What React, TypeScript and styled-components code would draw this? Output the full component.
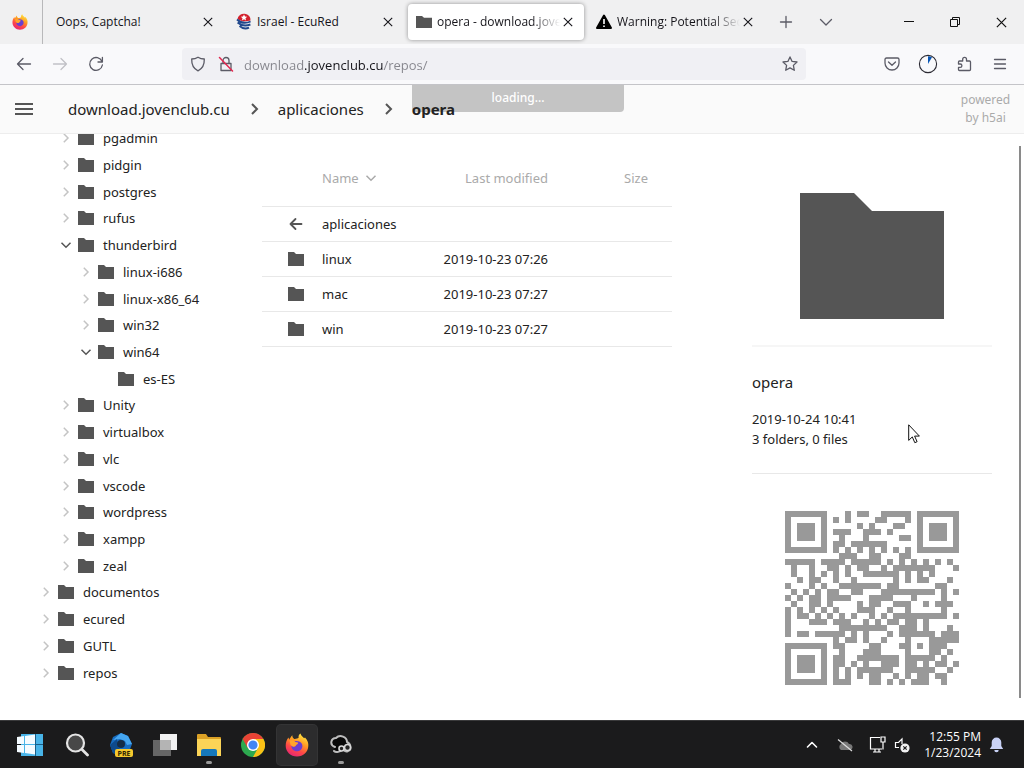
import React from "react";
import styled, { createGlobalStyle } from "styled-components";

const Global = createGlobalStyle`
  * { box-sizing: border-box; }
  body { margin: 0; background: #fff; color: #222; font-family: "Noto Sans", "Open Sans", sans-serif; }
  button { border: 0; padding: 0; background: none; color: inherit; font: inherit; cursor: pointer; }
  a { color: inherit; text-decoration: none; }
  svg { display: block; flex: none; }
`;

const Page = styled.div`
  position: relative;
  min-height: 100vh;
  display: flex;
  flex-direction: column;
`;

/* ---------- browser chrome ---------- */

const TabBar = styled.div`
  display: flex;
  align-items: stretch;
  height: 44px;
  background: #f0f0f1;
  color: #15141a;
  font: 12px/16px "Open Sans", "Noto Sans", sans-serif;
`;

const PinnedTab = styled.button`
  width: 43px;
  margin-right: 3px;
  padding-right: 3px;
  border-right: 1px solid #b8b8ba;
  display: grid;
  place-items: center;
`;

const Tab = styled.div<{ $active?: boolean }>`
  flex: 0 1 176px;
  min-width: 0;
  margin: 4px 2px;
  padding: 0 8px;
  display: flex;
  align-items: center;
  border-radius: 4px;
  background: ${(p) => (p.$active ? "#fff" : "transparent")};
  box-shadow: ${(p) => (p.$active ? "0 0 4px rgba(0, 0, 0, 0.4)" : "none")};
`;

const TabLabel = styled.button<{ $fade?: boolean }>`
  flex: 1;
  min-width: 0;
  display: flex;
  align-items: center;
  gap: 5px;
  height: 100%;
  overflow: hidden;
  white-space: nowrap;
  text-align: left;
  mask-image: ${(p) => (p.$fade ? "linear-gradient(90deg, #000 80%, transparent)" : "none")};
`;

const CloseButton = styled.button`
  width: 16px;
  height: 16px;
  display: grid;
  place-items: center;
`;

const TabAction = styled.button`
  width: 40px;
  display: grid;
  place-items: center;
  color: #5b5b66;
`;

const WindowControls = styled.div`
  display: flex;
  margin-left: auto;
`;

const WindowButton = styled.button`
  width: 46px;
  display: grid;
  place-items: center;
  color: #111;
`;

const Toolbar = styled.div`
  display: flex;
  align-items: center;
  height: 41px;
  padding: 0 6px;
  background: #f9f9fb;
  border-bottom: 1px solid #c4c4c8;
  color: #5b5b66;
`;

const ToolButton = styled.button<{ $dim?: boolean }>`
  width: 36px;
  height: 32px;
  display: grid;
  place-items: center;
  opacity: ${(p) => (p.$dim ? 0.35 : 1)};
`;

const AddressBar = styled.div`
  flex: 1;
  display: flex;
  align-items: center;
  height: 32px;
  margin: 0 68px;
  padding: 0 8px;
  gap: 12px;
  border-radius: 4px;
  background: #f0f0f4;
`;

const AddressInput = styled.input`
  flex: 1;
  min-width: 0;
  height: 24px;
  margin-left: -2px;
  padding: 2px 0 0;
  border: 0;
  outline: 0;
  font: 13px/22px "Open Sans", "Noto Sans", sans-serif;
  color: transparent;
  background: linear-gradient(90deg, #85858c 61px, #15141a 61px 139px, #85858c 139px);
  background-clip: text;
`;

/* ---------- file index page ---------- */

const Header = styled.header`
  position: relative;
  z-index: 1;
  display: flex;
  align-items: center;
  height: 49px;
  padding: 0 12px;
  background: #fafafa;
  border-bottom: 1px solid #ededed;
`;

const MenuButton = styled.button`
  width: 24px;
  height: 24px;
  margin-right: 32px;
  display: grid;
  place-items: center;
`;

const Crumbs = styled.nav`
  position: relative;
  z-index: 1;
  display: flex;
  align-items: center;
  gap: 16px;
  font-size: 15px;
  line-height: 20px;
`;

const Crumb = styled.a<{ $current?: boolean }>`
  font-weight: ${(p) => (p.$current ? 700 : 400)};
`;

const Powered = styled.a`
  margin-left: auto;
  width: 53px;
  text-align: center;
  color: #aaa;
  font-size: 12px;
  line-height: 18px;
`;

const Loading = styled.div`
  position: absolute;
  top: 0;
  left: calc(50% - 100px);
  width: 212px;
  height: 27px;
  border-radius: 0 0 4px 4px;
  background: #c4c4c4;
  color: #fff;
  text-align: center;
  font-size: 12px;
  font-weight: 500;
  line-height: 25px;
`;

const Body = styled.div`
  flex: 1;
  display: flex;
  min-height: 0;
  padding-right: 3px;
`;

const Sidebar = styled.nav`
  flex: 0 0 262px;
  overflow: hidden;
`;

const Tree = styled.ul`
  list-style: none;
  margin: -9px 0 0;
  padding: 0;
  height: 561px;
  display: grid;
  grid-template-rows: repeat(21, 1fr);
  align-items: center;
  font-size: 13px;
  line-height: 20px;
`;

const TreeItem = styled.li<{ $depth: number }>`
  display: flex;
  align-items: center;
  padding-left: ${(p) => 38 + p.$depth * 20}px;
`;

const Expander = styled.button`
  width: 16px;
  height: 16px;
  margin-right: 4px;
`;

const TreeLink = styled.a`
  display: flex;
  align-items: center;
  gap: 9px;
`;

const Content = styled.main`
  flex: 1;
  min-width: 0;
  padding-top: 16px;
`;

const FileTable = styled.table`
  width: 100%;
  border-collapse: collapse;
  table-layout: fixed;
  font-size: 13px;
  line-height: 20px;
`;

const HeadCell = styled.th<{ $right?: boolean; $width?: number }>`
  width: ${(p) => (p.$width ? p.$width + "px" : "auto")};
  height: 56px;
  padding: 0;
  border-bottom: 1px solid #e8e8e8;
  color: #aaa;
  font-weight: 400;
  text-align: ${(p) => (p.$right ? "right" : "left")};
`;

const SortButton = styled.button`
  display: inline-flex;
  align-items: center;
  gap: 4px;
`;

const Cell = styled.td<{ $right?: boolean }>`
  height: 35px;
  padding: 0;
  border-bottom: 1px solid #e8e8e8;
  text-align: ${(p) => (p.$right ? "right" : "left")};
`;

const IconSlot = styled.div`
  padding-left: 26px;
`;

const Info = styled.aside`
  flex: 0 0 240px;
  margin: 0 27px 0 80px;
`;

const Preview = styled.div`
  display: flex;
  justify-content: center;
  padding: 59px 0 26px;
  border-bottom: 2px solid #f6f6f6;
`;

const Details = styled.div`
  height: 127px;
  padding-top: 25px;
  border-bottom: 1px solid #e8e8e8;
  font-size: 13px;
  line-height: 20px;
`;

const Title = styled.h1`
  margin: 0 0 17px;
  font-size: 15px;
  line-height: 20px;
  font-weight: 400;
`;

const QrBox = styled.div`
  display: flex;
  justify-content: center;
  padding: 37px 0 35px;
`;

const ScrollThumb = styled.div`
  width: 2px;
  margin: 12px 0 22px;
  background: #8a8a8a;
`;

const Pointer = styled.svg`
  position: absolute;
  left: 908px;
  top: 424px;
`;

/* ---------- taskbar ---------- */

const Taskbar = styled.footer`
  display: flex;
  align-items: center;
  height: 48px;
  padding: 0 20px 0 10px;
  background: #1b1b1c;
  border-top: 1px solid #3a3a3b;
  color: #fff;
  font: 12px/16px "Open Sans", "Noto Sans", sans-serif;
`;

const TaskButtons = styled.nav`
  display: flex;
  gap: 4px;
`;

const TaskButton = styled.button<{ $active?: boolean; $running?: boolean }>`
  position: relative;
  width: 40px;
  height: 40px;
  border-radius: 4px;
  display: grid;
  place-items: center;
  background: ${(p) => (p.$active ? "#2c2c2d" : "transparent")};
  box-shadow: ${(p) => (p.$active ? "0 0 0 1px #343435" : "none")};
  &:not(:first-child) {
    left: 3px;
  }
  &::after {
    content: "";
    display: ${(p) => (p.$running ? "block" : "none")};
    position: absolute;
    bottom: 1px;
    left: 17px;
    width: 6px;
    height: 3px;
    border-radius: 2px;
    background: #9a9a9a;
  }
`;

const Tray = styled.div`
  display: flex;
  align-items: center;
  margin-left: auto;
`;

const TrayButton = styled.button<{ $gap: number }>`
  margin-right: ${(p) => p.$gap}px;
`;

const Clock = styled.button`
  margin-right: 8px;
  text-align: right;
`;

/* ---------- drawings ---------- */

const Cross = ({ size = 10 }: { size?: number }) => (
  <svg width={size} height={size} viewBox="0 0 10 10" stroke="currentColor" strokeWidth="1.1" fill="none">
    <path d="M.8.8l8.4 8.4M9.2.8L.8 9.2" />
  </svg>
);

const Folder = ({ width = 16, height = 14 }: { width?: number; height?: number }) => (
  <svg width={width} height={height} viewBox="0 0 16 14" preserveAspectRatio="none" fill="#555">
    <path d="M0 0h6l2 2h8v12H0z" />
  </svg>
);

const Chevron = ({ dir, color, size = 16, stroke = 1.5 }: { dir: "right" | "down"; color: string; size?: number; stroke?: number }) => (
  <svg width={size} height={size} viewBox="0 0 16 16" fill="none" stroke={color} strokeWidth={stroke}>
    <path d={dir === "right" ? "M5.8 3.8L10 8l-4.200 4.200" : "M3.500 5.800L8 10.200l4.500-4.400"} />
  </svg>
);

const CrumbArrow = () => (
  <svg width="16" height="16" viewBox="0 0 16 16" fill="none" stroke="#555" strokeWidth="2">
    <path d="M6 3l5 5-5 5" />
  </svg>
);

const Firefox = ({ size }: { size: number }) => (
  <svg width={size} height={size} viewBox="0 0 24 24">
    <defs>
      <linearGradient id="flame" x1="0.8" y1="0" x2="0.3" y2="1">
        <stop offset="0" stopColor="#fff044" />
        <stop offset=".4" stopColor="#ff9a22" />
        <stop offset=".7" stopColor="#ff4748" />
        <stop offset="1" stopColor="#e52575" />
      </linearGradient>
    </defs>
    <path d="M15.500.5c.3 2 2 3 3.600 4.700L20 4.500c3 3 3.500 6 3.300 8.500-.3 6-5 10.500-11.300 10.500S.7 18.700.7 12.700c0-3.200.9-6 2.800-8.200l.7 2.200C5 5.500 6 3.300 7.300 2.300c0 1.700.7 2.900 2 3.700 2 .1 3.300-.6 4.300-1.200C13.300 3 14 1.500 15.500.5z" fill="url(#flame)" />
    <path d="M7 9.500c3-2.500 8.500-2 10 1.500 1.300 3.500-.8 7-4.500 7.300-4 .2-6.500-2.800-6-5.800 1 1 2.500 1.200 4 .6-1-1.600-2-2.600-3.500-3.600z" fill="#6a3fd0" />
    <path d="M4.500 7.500c2.500-.8 4.500-.2 6 1.500 1.500.2 2.500.4 2.700 1.100-.5 1.500-2 1.500-2.600 3-1.400.8-3.300 1-5.100-1.300z" fill="#ffa52a" />
  </svg>
);

const EcuRed = () => (
  <svg width="16" height="18" viewBox="0 0 16 18">
    <path d="M1.500 6a6.500 6 0 0 1 13 1.500c-4 1-9 1.500-13-1.500z" fill="#d3202c" />
    <path d="M8 1.500l1 2 2.200.2-1.700 1.500.5 2.200-2-1.200L6 7.400l.5-2.200-1.700-1.500 2.200-.2z" fill="#fff" />
    <path d="M1 6.500c4 3.800 9 4 13.600 2M1.600 9.500c4 3.600 8.500 3.600 12.800 2M3.500 13c3 2.500 6.500 3 9.500 1.600" fill="none" stroke="#20488c" strokeWidth="1.900" />
  </svg>
);

const Warning = () => (
  <svg width="16" height="16" viewBox="0 0 16 16">
    <path d="M8 1.500L15 14H1z" stroke="#000" strokeWidth="2" strokeLinejoin="round" />
    <path d="M8 5v5M8 11.500v1.500" stroke="#fff" strokeWidth="1.600" />
  </svg>
);

const Line = ({ d, size = 16, width = 1.3, color = "currentColor", children }: { d: string; size?: number; width?: number; color?: string; children?: React.ReactNode }) => (
  <svg width={size} height={size} viewBox="0 0 16 16" fill="none" stroke={color} strokeWidth={width} strokeLinejoin="round" strokeLinecap="round">
    <path d={d} />
    {children}
  </svg>
);

const MODULES: number[][] = [
  [10, 12, 13, 16, 17, 18, 19, 20],
  [8, 10, 15, 16, 20],
  [12, 14, 18, 19],
  [8, 9, 10, 13, 14, 15, 17],
  [9, 13, 19, 20],
  [8, 9, 11, 12, 13, 14, 15, 16],
  [8, 10, 12, 14, 16, 18, 20],
  [9, 10, 11, 14, 15, 19, 20],
  [0, 1, 2, 3, 4, 6, 7, 8, 9, 11, 12, 13, 14, 15, 17, 19, 21, 23, 25, 27],
  [1, 4, 7, 8, 10, 12, 13, 16, 18, 19, 20, 21, 22, 23, 24, 28],
  [1, 4, 6, 8, 10, 13, 14, 15, 16, 17, 18, 20, 22, 24],
  [2, 4, 5, 8, 11, 18, 20, 22, 23, 27],
  [0, 4, 6, 9, 10, 11, 12, 13, 14, 15, 17, 18, 25, 26],
  [1, 3, 5, 7, 8, 11, 12, 16, 17, 18, 19, 20, 21, 22, 23, 24, 26, 28],
  [0, 2, 4, 5, 7, 8, 9, 10, 14, 15, 16, 17, 21, 26],
  [1, 4, 5, 7, 12, 14, 15, 18, 19, 20, 23, 25, 26, 27],
  [0, 2, 4, 6, 8, 12, 13, 14, 17, 20, 26],
  [0, 2, 3, 5, 7, 9, 11, 14, 16, 18, 19, 20, 21, 22, 23, 24, 25, 26, 28],
  [0, 4, 5, 6, 8, 9, 10, 13, 15, 17, 18, 20, 21, 23],
  [0, 9, 10, 11, 12, 13, 14, 15, 16, 19, 20, 21, 23, 27],
  [0, 2, 3, 5, 6, 7, 8, 9, 11, 13, 17, 19, 20, 21, 22, 23, 24, 26, 27, 28],
  [8, 10, 11, 13, 16, 20, 24, 25, 26, 27, 28],
  [8, 9, 14, 15, 19, 20, 22, 24, 25, 26],
  [9, 13, 14, 15, 20, 24, 25, 27],
  [8, 9, 12, 13, 14, 15, 16, 17, 18, 20, 21, 22, 23, 24, 26],
  [8, 9, 11, 13, 16, 17, 18, 20, 21, 23, 25, 26, 28],
  [8, 10, 12, 13, 14, 15, 16, 17, 20, 21, 22, 23, 24, 27],
  [8, 10, 12, 14, 15, 18, 20, 22, 23, 25, 26],
  [8, 9, 10, 14, 15, 17, 19, 21, 22, 23, 26],
];

const FINDERS = [[0, 0], [22, 0], [0, 22]];

const QrCode = () => (
  <svg width="174" height="174" viewBox="0 0 29 29" fill="#999" shapeRendering="crispEdges" role="img" aria-label="QR code">
    {FINDERS.map(([x, y]) => (
      <path key={`${x}-${y}`} fillRule="evenodd" d={`M${x} ${y}h7v7h-7zM${x + 1} ${y + 1}v5h5v-5zM${x + 2} ${y + 2}h3v3h-3z`} />
    ))}
    <path d={MODULES.map((row, y) => row.map((x) => `M${x} ${y}h1v1h-1z`).join("")).join("")} />
  </svg>
);

const WindowsLogo = () => (
  <svg width="28" height="24" viewBox="0 0 28 24">
    <path d="M5 1h22v22H5z" fill="#48b4e8" />
    <path d="M1 4l7-1v8H1zM9 3l10-1.500V11H9zM1 12h7v8l-7-1zM9 12h10v9.500L9 20z" fill="#f4fbff" />
    <path d="M20 11.500h7M19.500 1v22" stroke="#1a5d86" strokeWidth="1" />
  </svg>
);

const SearchLogo = () => (
  <svg width="24" height="24" viewBox="0 0 24 24" stroke="#e4e4e4" fill="#484848">
    <circle cx="10.500" cy="10" r="8.500" strokeWidth="2.200" />
    <path d="M17 16.500l5.500 5.500" strokeWidth="2.800" strokeLinecap="round" />
  </svg>
);

const PreText = styled.text`
  font: 700 7px "Open Sans", sans-serif;
`;

const PreviewApp = () => (
  <svg width="24" height="26" viewBox="0 0 24 26">
    <path d="M12 1l7 3 4 8-3 8-8 4-8-3-3-8 3-8z" fill="#176cc0" />
    <path d="M12 1l7 3 4 8-5 1-2-4-5-2-7 1z" fill="#45a5ef" />
    <path d="M1 13l7-6 1 8 5 5-2 4-8-3z" fill="#0e4a8c" />
    <circle cx="12" cy="12" r="4" fill="#142c48" />
    <rect x="6" y="17" width="18" height="8" rx="2" fill="#f6c92d" />
    <PreText x="15" y="24" textAnchor="middle" fill="#2a2200" textRendering="geometricPrecision">PRE</PreText>
  </svg>
);

const TaskView = () => (
  <svg width="26" height="24" viewBox="0 0 26 24">
    <path d="M8 1h17v16H8z" fill="#f2f2f2" />
    <path d="M1 7h18v16H1z" fill="#666" />
    <path d="M8 7h11v10H8z" fill="#b4b4b4" />
  </svg>
);

const Explorer = () => (
  <svg width="26" height="24" viewBox="0 0 26 24">
    <path d="M1 2q0-1 1-1h8l2 3h12q1 0 1 1v7H1z" fill="#dba125" />
    <path d="M1 6h24v17H1z" fill="#fbd457" />
    <path d="M5 23v-5q0-2 2-2h12q2 0 2 2v5z" fill="#1678ba" />
  </svg>
);

const Chrome = () => (
  <svg width="24" height="24" viewBox="0 0 24 24">
    <circle cx="12" cy="12" r="12" fill="#2da94f" />
    <path d="M12 12L1.600 6A12 12 0 0 1 22.400 6z" fill="#e84335" />
    <path d="M12 6h10.400A12 12 0 0 1 12 24l5-9z" fill="#fbc116" />
    <path d="M1.600 6l5.200 9L12 12V6z" fill="#e84335" />
    <circle cx="12" cy="12" r="6" fill="#fff" />
    <circle cx="12" cy="12" r="4.600" fill="#4285f4" />
  </svg>
);

const Keys = () => (
  <svg width="24" height="22" viewBox="0 0 24 22" strokeLinecap="round" strokeLinejoin="round">
    <path d="M6 13c-6-2-4-9 1-9 4-4 11-1 11 4 4 2 5 8 1 9-2 1-4 0-5-2-3 3-7 4-9 2" fill="#080808" stroke="#bdbdbd" strokeWidth="2" />
    <circle cx="12.500" cy="14.500" r="2.500" fill="#222" stroke="#d8d8d8" strokeWidth="1.600" />
    <circle cx="18.500" cy="13.500" r="3" fill="#222" stroke="#d8d8d8" strokeWidth="1.600" />
  </svg>
);

/* ---------- data ---------- */

type Node = { name: string; depth: number; state?: "open" | "leaf" };

const NODES: Node[] = [
  { name: "pgadmin", depth: 1 },
  { name: "pidgin", depth: 1 },
  { name: "postgres", depth: 1 },
  { name: "rufus", depth: 1 },
  { name: "thunderbird", depth: 1, state: "open" },
  { name: "linux-i686", depth: 2 },
  { name: "linux-x86_64", depth: 2 },
  { name: "win32", depth: 2 },
  { name: "win64", depth: 2, state: "open" },
  { name: "es-ES", depth: 3, state: "leaf" },
  { name: "Unity", depth: 1 },
  { name: "virtualbox", depth: 1 },
  { name: "vlc", depth: 1 },
  { name: "vscode", depth: 1 },
  { name: "wordpress", depth: 1 },
  { name: "xampp", depth: 1 },
  { name: "zeal", depth: 1 },
  { name: "documentos", depth: 0 },
  { name: "ecured", depth: 0 },
  { name: "GUTL", depth: 0 },
  { name: "repos", depth: 0 },
];

const FILES = [
  { name: "linux", date: "2019-10-23 07:26" },
  { name: "mac", date: "2019-10-23 07:27" },
  { name: "win", date: "2019-10-23 07:27" },
];

const TABS = [
  { title: "Oops, Captcha!", icon: null },
  { title: "Israel - EcuRed", icon: <EcuRed /> },
  { title: "opera - download.jovenclub.cu", icon: <Folder width={16} height={12} />, active: true, fade: true },
  { title: "Warning: Potential Security Risk", icon: <Warning />, fade: true },
];

export default function App() {
  return (
    <Page>
      <Global />
      <TabBar>
        <PinnedTab aria-label="Firefox"><Firefox size={16} /></PinnedTab>
        {TABS.map((t) => (
          <Tab key={t.title} $active={t.active}>
            <TabLabel $fade={t.fade}>
              {t.icon}
              <span>{t.title}</span>
            </TabLabel>
            <CloseButton aria-label={`Close ${t.title}`}><Cross /></CloseButton>
          </Tab>
        ))}
        <TabAction aria-label="New tab"><Line d="M8 2.500v11M2.500 8h11" /></TabAction>
        <TabAction aria-label="List all tabs"><Line d="M2.500 5.500L8 11l5.500-5.500" /></TabAction>
        <WindowControls>
          <WindowButton aria-label="Minimize">
            <svg width="10" height="10" viewBox="0 0 10 10"><path d="M0 4.500h10" stroke="currentColor" /></svg>
          </WindowButton>
          <WindowButton aria-label="Restore">
            <svg width="10" height="10" viewBox="0 0 10 10" fill="none" stroke="currentColor">
              <path d="M.5 2.500h7v7h-7zM2.500 2.500v-2h7v7h-2" />
            </svg>
          </WindowButton>
          <WindowButton aria-label="Close window"><Cross size={11} /></WindowButton>
        </WindowControls>
      </TabBar>

      <Toolbar>
        <ToolButton aria-label="Back"><Line d="M14.500 8h-13M7 2.500L1.500 8 7 13.500" /></ToolButton>
        <ToolButton aria-label="Forward" $dim><Line d="M1.500 8h13M9 2.500L14.500 8 9 13.500" /></ToolButton>
        <ToolButton aria-label="Reload"><Line d="M14 5.500A6.400 6.400 0 1 0 14.400 9M14.400 1.500v4.500H10" /></ToolButton>
        <AddressBar>
          <Line d="M8 1.200c2 1.300 4 1.800 6.300 1.800.2 6-1.500 9.500-6.300 11.800C3.200 12.500 1.500 9 1.700 3 4 3 6 2.500 8 1.200z" />
          <Line d="M3 7.500h10v7H3zM5 7.500V4.500a3 3 0 0 1 6 0v3">
            <path d="M1.500 1.500l13 13.500" stroke="#e22850" strokeWidth="1.500" />
          </Line>
          <AddressInput aria-label="Address" defaultValue="download.jovenclub.cu/repos/" />
          <Line d="M8 .9l2.100 4.500 4.900.6-3.600 3.400.9 4.900L8 11.900l-4.300 2.400.9-4.900L1 6l4.900-.6z" />
        </AddressBar>
        <ToolButton aria-label="Save to Pocket">
          <Line d="M2.500 2h11q1.500 0 1.500 1.500V7a7 7 0 0 1-14 0V3.500Q1 2 2.500 2zM4.500 6L8 9.300 11.500 6" />
        </ToolButton>
        <ToolButton aria-label="Downloads">
          <svg width="20" height="20" viewBox="0 0 20 20">
            <circle cx="10" cy="10" r="8.600" fill="none" stroke="#2b2a33" strokeWidth="1.100" />
            <path d="M10 10V2.200a7.800 7.800 0 0 1 4 1.100z" fill="#0a57b5" />
          </svg>
        </ToolButton>
        <ToolButton aria-label="Extensions">
          <Line d="M3.500 14.500h10q1 0 1-1V6q0-1-1-1H10.500V3.200a1.900 1.900 0 0 0-3.800 0V5H3.500q-1 0-1 1v2h1.700a1.700 1.700 0 0 1 0 3.400H2.500v2.100q0 1 1 1z" />
        </ToolButton>
        <ToolButton aria-label="Application menu"><Line d="M2.500 3.500h11M2.500 8h11M2.500 12.500h11" /></ToolButton>
      </Toolbar>

      <Header>
        <Loading role="status">loading...</Loading>
        <MenuButton aria-label="Toggle sidebar">
          <svg width="18" height="12" viewBox="0 0 18 12" fill="#555"><path d="M0 0h18v2H0zM0 5h18v2H0zM0 10h18v2H0z" /></svg>
        </MenuButton>
        <Crumbs aria-label="Breadcrumb">
          <Crumb href="#">download.jovenclub.cu</Crumb>
          <CrumbArrow />
          <Crumb href="#">aplicaciones</Crumb>
          <CrumbArrow />
          <Crumb href="#" $current>opera</Crumb>
        </Crumbs>
        <Powered href="#">powered by h5ai</Powered>
      </Header>

      <Body>
        <Sidebar aria-label="Folders">
          <Tree>
            {NODES.map((n) => (
              <TreeItem key={n.name} $depth={n.depth}>
                <Expander aria-label={`Toggle ${n.name}`}>
                  {n.state !== "leaf" && (
                    <Chevron dir={n.state === "open" ? "down" : "right"} color={n.state === "open" ? "#555" : "#c4c4c4"} />
                  )}
                </Expander>
                <TreeLink href="#"><Folder /><span>{n.name}</span></TreeLink>
              </TreeItem>
            ))}
          </Tree>
        </Sidebar>

        <Content>
          <FileTable>
            <thead>
              <tr>
                <HeadCell $width={60} aria-label="Type" />
                <HeadCell><SortButton>Name <Chevron dir="down" color="#aaa" /></SortButton></HeadCell>
                <HeadCell $right $width={110}>Last modified</HeadCell>
                <HeadCell $right $width={100}>Size</HeadCell>
                <HeadCell $width={24} aria-hidden="true" />
              </tr>
            </thead>
            <tbody>
              <tr>
                <Cell>
                  <IconSlot><Line d="M13.500 8H2.500M7.500 3l-5 5 5 5" width={1.8} color="#555" /></IconSlot>
                </Cell>
                <Cell><a href="#">aplicaciones</a></Cell>
                <Cell /><Cell /><Cell />
              </tr>
              {FILES.map((f) => (
                <tr key={f.name}>
                  <Cell><IconSlot><Folder /></IconSlot></Cell>
                  <Cell><a href="#">{f.name}</a></Cell>
                  <Cell $right>{f.date}</Cell>
                  <Cell /><Cell />
                </tr>
              ))}
            </tbody>
          </FileTable>
        </Content>

        <Info>
          <Preview>
            <svg width="144" height="126" viewBox="0 0 144 126" fill="#555"><path d="M0 0h54l18 18h72v108H0z" /></svg>
          </Preview>
          <Details>
            <Title>opera</Title>
            <div>2019-10-24 10:41</div>
            <div>3 folders, 0 files</div>
          </Details>
          <QrBox><QrCode /></QrBox>
        </Info>
        <ScrollThumb />
      </Body>

      <Taskbar>
        <TaskButtons aria-label="Taskbar">
          <TaskButton aria-label="Start"><WindowsLogo /></TaskButton>
          <TaskButton aria-label="Search"><SearchLogo /></TaskButton>
          <TaskButton aria-label="Preview app"><PreviewApp /></TaskButton>
          <TaskButton aria-label="Task view"><TaskView /></TaskButton>
          <TaskButton aria-label="File Explorer" $running><Explorer /></TaskButton>
          <TaskButton aria-label="Chrome"><Chrome /></TaskButton>
          <TaskButton aria-label="Firefox window" $active><Firefox size={24} /></TaskButton>
          <TaskButton aria-label="Keys" $running><Keys /></TaskButton>
        </TaskButtons>
        <Tray>
          <TrayButton aria-label="Show hidden icons" $gap={17}><Line d="M3.500 10L8 5.500l4.500 4.500" width={1.6} /></TrayButton>
          <TrayButton aria-label="OneDrive" $gap={16}>
            <svg width="16" height="16" viewBox="0 0 16 16">
              <path d="M4 13a3.500 3.500 0 0 1 0-6 4.500 4.500 0 0 1 8 0 3 3 0 0 1 1 6z" fill="#777" />
              <path d="M1 2.500l14 11.500" stroke="#ddd" strokeWidth="1.200" />
            </svg>
          </TrayButton>
          <TrayButton aria-label="Network" $gap={8}>
            <svg width="17" height="17" viewBox="0 0 17 17" fill="none" stroke="currentColor" strokeWidth="1.200">
              <path d="M11 1.500H1.500v11.500H13M4 16h8M6 13v3M10 13v3M12 1h4v5h-4zM14 6v7.500" />
            </svg>
          </TrayButton>
          <TrayButton aria-label="Volume muted" $gap={14}>
            <svg width="16" height="16" viewBox="0 0 16 16" fill="none" stroke="currentColor" strokeWidth="1.200">
              <path d="M8 7V2L4.500 5.500H1.500v5H5" />
              <circle cx="11" cy="11" r="4.600" fill="#f2f2f2" stroke="none" />
              <path d="M9.300 9.300l3.400 3.400M12.700 9.300l-3.400 3.400" stroke="#1b1b1c" />
            </svg>
          </TrayButton>
          <Clock>12:55 PM<br />1/23/2024</Clock>
          <TrayButton aria-label="Notifications" $gap={0}>
            <svg width="15" height="16" viewBox="0 0 15 16" fill="#c9d2f6">
              <path d="M7.500.5a4.800 4.800 0 0 1 4.800 4.800V9l1.900 3H.8l1.900-3V5.300A4.800 4.800 0 0 1 7.500.5zM5.300 13h4.400a2.200 2.200 0 0 1-4.400 0z" />
            </svg>
          </TrayButton>
        </Tray>
      </Taskbar>

      <Pointer width="12" height="20" viewBox="0 0 12 20" aria-hidden="true">
        <path d="M.7.800v15.600l3.600-3.500 2.500 5.800 2.300-1-2.500-5.600h4.800z" fill="#fff" stroke="#111" />
      </Pointer>
    </Page>
  );
}
